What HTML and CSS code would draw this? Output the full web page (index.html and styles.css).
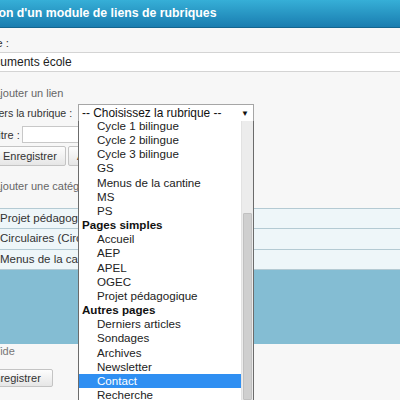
FILE: index.html
```html
<!DOCTYPE html>
<html lang="fr">
<head>
<meta charset="utf-8">
<title>Module de liens de rubriques</title>
<link rel="stylesheet" href="styles.css">
</head>
<body>
<div class="header"><h1 class="title">Modification d'un module de liens de rubriques</h1></div>
<div class="main">
  <div class="label label-titre">Titre :</div>
  <div class="field-big"><span class="field-text">Documents école</span></div>

  <div class="section section-lien">Ajouter un lien</div>
  <div class="row-select">
    <span class="label label-vers">Vers la rubrique :</span>
    <div class="select"><span>-- Choisissez la rubrique --</span><span class="arrow">▼</span></div>
  </div>
  <div class="row-titre2">
    <span class="label label-titre2">Titre :</span>
    <span class="small-input"></span>
  </div>
  <div class="row-buttons">
    <span class="btn btn-save">Enregistrer</span>
    <span class="btn btn-cancel">Annuler</span>
  </div>

  <div class="section section-cat">Ajouter une catégorie</div>
  <ul class="links">
    <li>Projet pédagogique</li>
    <li>Circulaires (Circulaires)</li>
    <li>Menus de la cantine</li>
  </ul>
  <div class="drop-zone"></div>
  <div class="hint">Vide</div>
  <div class="row-final"><span class="btn btn-final">Enregistrer</span></div>
</div>

<div class="dropdown">
  <div class="scroller">
    <ul class="options">
      <li class="opt">Cycle 1 bilingue</li>
      <li class="opt">Cycle 2 bilingue</li>
      <li class="opt">Cycle 3 bilingue</li>
      <li class="opt">GS</li>
      <li class="opt">Menus de la cantine</li>
      <li class="opt">MS</li>
      <li class="opt">PS</li>
      <li class="group">Pages simples</li>
      <li class="opt">Accueil</li>
      <li class="opt">AEP</li>
      <li class="opt">APEL</li>
      <li class="opt">OGEC</li>
      <li class="opt">Projet pédagogique</li>
      <li class="group">Autres pages</li>
      <li class="opt">Derniers articles</li>
      <li class="opt">Sondages</li>
      <li class="opt">Archives</li>
      <li class="opt">Newsletter</li>
      <li class="opt selected">Contact</li>
      <li class="opt">Recherche</li>
      <li class="opt">Plan du site</li>
    </ul>
  </div>
  <div class="scrollbar"><div class="thumb"></div></div>
</div>
</body>
</html>
```

FILE: styles.css
```css
html, body {
  margin: 0;
  padding: 0;
}
body {
  width: 400px;
  height: 400px;
  overflow: hidden;
  background: #f7f7f7;
  font-family: "Liberation Sans", Arial, sans-serif;
  color: #333;
  position: relative;
}
.header {
  height: 27px;
  background: linear-gradient(#36afd7, #1a7db0);
  border-bottom: 1px solid #14658f;
  overflow: hidden;
  white-space: nowrap;
}
.title {
  margin: 0 0 0 -59px;
  font-size: 12.3px;
  font-weight: bold;
  color: #fff;
  line-height: 27px;
}
.main {
  white-space: nowrap;
}
.label {
  font-size: 11px;
  color: #333;
}
.label-titre {
  display: block;
  margin: 8px 0 0 -20px;
  line-height: 14px;
  font-size: 11.5px;
}
.field-big {
  margin-top: 2px;
  height: 18px;
  background: #fff;
  border-top: 1px solid #d4d4d4;
  border-bottom: 1px solid #d4d4d4;
  display: flex;
  align-items: center;
}
.field-text {
  font-size: 12px;
  margin-left: -21px;
  color: #222;
}
.section {
  font-size: 11px;
  color: #666;
  line-height: 14px;
}
.section-lien {
  margin: 14px 0 0 -7px;
}
.row-select {
  display: flex;
  align-items: center;
  height: 18px;
  margin-top: 4px;
}
.label-vers {
  width: 80px;
  margin-left: -8px;
  flex: none;
  font-size: 10.6px;
}
.select {
  box-sizing: border-box;
  width: 176px;
  height: 18px;
  margin-left: 6px;
  border: 1px solid #a6a6a6;
  background: #fff;
  display: flex;
  align-items: center;
  justify-content: space-between;
  padding: 0 4px 0 3px;
  font-size: 11.9px;
  color: #111;
}
.arrow {
  font-size: 8px;
  color: #111;
}
.row-titre2 {
  display: flex;
  align-items: center;
  height: 17px;
  margin-top: 4px;
}
.label-titre2 {
  margin-left: -8px;
  width: 30px;
  flex: none;
}
.small-input {
  box-sizing: border-box;
  width: 70px;
  height: 17px;
  background: #fff;
  border: 1px solid #c8c8c8;
}
.row-buttons {
  display: flex;
  gap: 2px;
  margin-top: 3px;
  margin-left: -6px;
}
.btn {
  box-sizing: border-box;
  display: inline-block;
  height: 20px;
  line-height: 18px;
  font-size: 11px;
  color: #333;
  background: linear-gradient(#fdfdfd, #e6e6e6);
  border: 1px solid #c4c4c4;
  border-radius: 2px;
  padding: 0 8px;
}
.btn-save {
  width: 72px;
}
.section-cat {
  margin: 13px 0 0 -7px;
}
.links {
  list-style: none;
  margin: 15px 0 0 0;
  padding: 0;
  border-top: 1px solid #b4cad3;
}
.links li {
  height: 19.3px;
  line-height: 19px;
  background: #eef6f9;
  border-bottom: 1px solid #b4cad3;
  font-size: 11.5px;
  color: #333;
  margin-left: -1px;
  padding-left: 1px;
}
.drop-zone {
  height: 74px;
  background: #84bdd3;
}
.hint {
  font-size: 11px;
  color: #777;
  line-height: 14px;
  margin: 0 0 0 -7px;
}
.row-final {
  margin-top: 10px;
  margin-left: -24px;
}
.btn-final {
  width: 77px;
  height: 18px;
  line-height: 16px;
  padding-left: 10px;
}

/* open select dropdown (overlay) */
.dropdown {
  position: absolute;
  left: 78px;
  top: 121px;
  width: 176px;
  height: 290px;
  box-sizing: border-box;
  border: 1px solid #6b6b6b;
  border-top: none;
  background: #fff;
  display: flex;
  overflow: hidden;
}
.scroller {
  flex: 1;
  overflow: hidden;
}
.options {
  list-style: none;
  margin: -2px 0 0 0;
  padding: 0;
  font-size: 11.6px;
  color: #222;
}
.options li {
  height: 14.16px;
  line-height: 14.16px;
  white-space: nowrap;
}
.opt {
  padding-left: 18px;
}
.group {
  padding-left: 3px;
  font-weight: bold;
  color: #111;
}
.selected {
  background: #2f8ff2;
  color: #fff;
}
.scrollbar {
  width: 12px;
  flex: none;
  background: #ececec;
  border-left: 1px solid #e2e2e2;
  padding-top: 92px;
  box-sizing: border-box;
}
.thumb {
  height: 185px;
  margin: 0 1px;
  background: #cfcfcf;
  border: 1px solid #c0c0c0;
  border-radius: 1px;
}
```
